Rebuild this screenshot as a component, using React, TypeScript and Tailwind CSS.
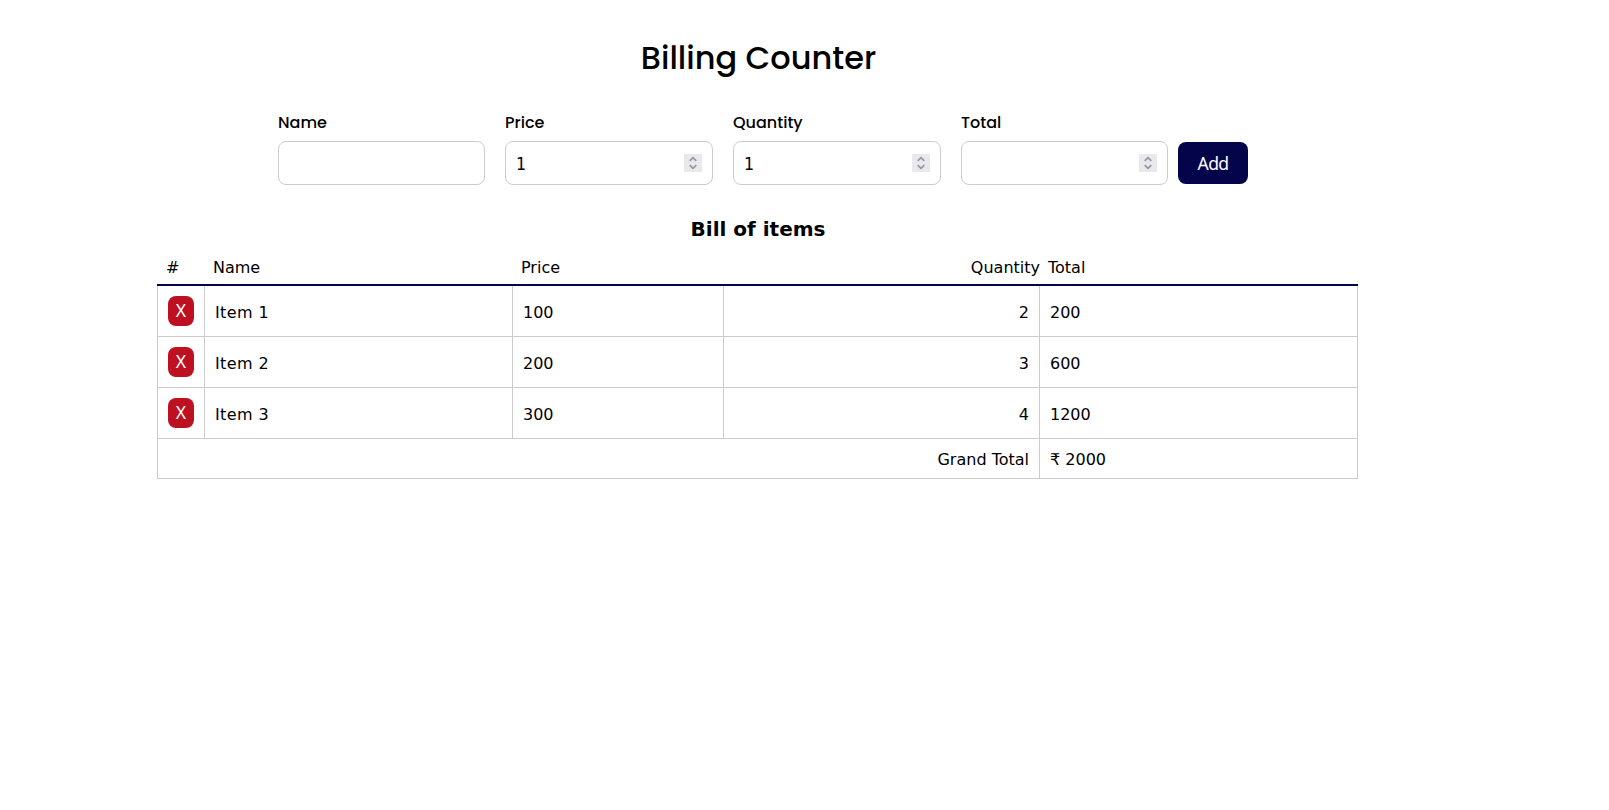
import React from "react";

type Item = { name: string; price: number; quantity: number };

const items: Item[] = [
  { name: "Item 1", price: 100, quantity: 2 },
  { name: "Item 2", price: 200, quantity: 3 },
  { name: "Item 3", price: 300, quantity: 4 },
];

const total = items.reduce((sum, i) => sum + i.price * i.quantity, 0);

function Spinner() {
  return (
    <span className="flex h-[18px] w-[18px] items-center justify-center bg-[#e9e9ed]">
      <svg width="18" height="18" viewBox="0 0 18 18" fill="none" stroke="#9594a3" strokeWidth="1.7">
        <path d="M5.7 6.9 9 3.7l3.3 3.2M5.7 11.1 9 14.3l3.3-3.2" />
      </svg>
    </span>
  );
}

function Field({ label, value, number }: { label: string; value?: string; number?: boolean }) {
  return (
    <div>
      <div className="flex h-[23px] items-center">
        <span className="font-['Poppins','Inter',sans-serif] text-[16px] font-medium leading-6">{label}</span>
      </div>
      <div className="mt-[7px] flex h-11 items-center justify-between rounded-lg border border-[#cccccc] px-[10px]">
        <span className="pt-[2px] font-['Tahoma','DejaVu_Sans_Condensed',sans-serif] text-[17.6px] leading-6">{value}</span>
        {number && <Spinner />}
      </div>
    </div>
  );
}

const cell = "flex items-center border-b border-r border-[#cccccc] px-[10px] pt-[3px]";

export default function App() {
  return (
    <div className="min-h-[810px] bg-white font-['Verdana','DejaVu_Sans',sans-serif] text-[16px] leading-6 text-black">
      <main className="ml-[157px] flex w-[1201px] flex-col">
        <h1 className="mt-[34px] pl-[2px] text-center font-['Poppins','Inter',sans-serif] text-[32px] font-medium leading-[48px]">
          Billing Counter
        </h1>
        <div className="ml-[121px] mt-[29px] flex gap-[10px]">
          <div className="grid grid-cols-[207px_208px_208px_207px] gap-5">
            <Field label="Name" />
            <Field label="Price" value="1" number />
            <Field label="Quantity" value="1" number />
            <Field label="Total" number />
          </div>
          <button className="mt-[31px] h-[42px] w-[70px] rounded-lg bg-[#04044a] font-['Noto_Sans','Open_Sans',sans-serif] text-[17.6px] leading-6 tracking-[-0.7px] text-white">
            Add
          </button>
        </div>
        <h2 className="mt-[32px] pl-px text-center text-[20px] font-bold leading-6">Bill of items</h2>
        <div className="mt-[13px] grid h-[32px] grid-cols-[47px_308px_211px_316px_319px] border-b-2 border-[#04044a] pt-[2px]">
          <span className="pl-[9px]">#</span>
          <span className="pl-[9px]">Name</span>
          <span className="pl-[9px]">Price</span>
          <span className="-mr-px text-right">Quantity</span>
          <span className="pl-[9px]">Total</span>
        </div>
        <div className="border-l border-[#cccccc]">
          {items.map((item) => (
            <div key={item.name} className="grid h-[51px] grid-cols-[47px_308px_211px_316px_318px]">
              <div className="flex items-center border-b border-r border-[#cccccc] px-[10px]">
                <button className="h-[30px] w-[26px] shrink-0 rounded-lg bg-[#bd1020] pb-[2px] font-['Noto_Sans','Open_Sans',sans-serif] text-[17.6px] leading-[28px] text-white">
                  X
                </button>
              </div>
              <div className={cell + " tracking-[0.4px]"}>{item.name}</div>
              <div className={cell}>{item.price}</div>
              <div className={cell + " justify-end"}>{item.quantity}</div>
              <div className={cell}>{item.price * item.quantity}</div>
            </div>
          ))}
          <div className="grid h-[40px] grid-cols-[882px_318px]">
            <div className={cell + " justify-end"}>Grand Total</div>
            <div className={cell}>₹ {total}</div>
          </div>
        </div>
      </main>
    </div>
  );
}
